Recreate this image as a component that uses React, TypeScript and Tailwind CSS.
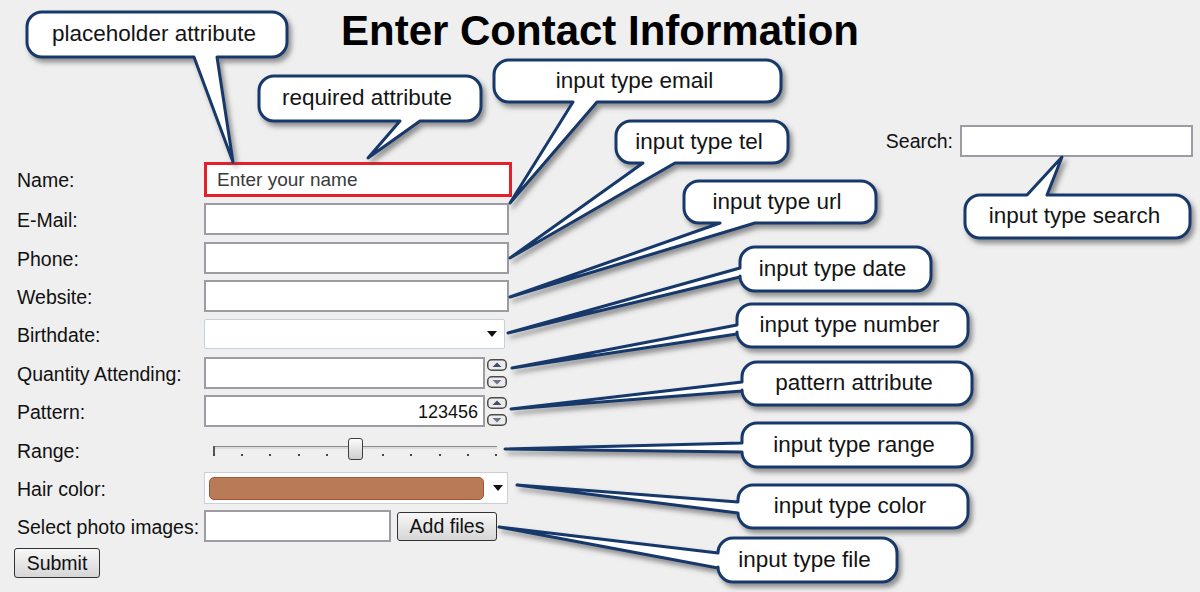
import React from 'react'

type Side = 'top' | 'bottom' | 'left'

type Callout = {
  text: string
  x: number
  y: number
  w: number
  h: number
  side: Side
  b1: number
  b2: number
  tip: [number, number]
}

const CALLOUTS: Callout[] = [
  { text: 'placeholder attribute', x: 27, y: 12, w: 260, h: 45, side: 'bottom', b1: 194, b2: 217, tip: [233, 162] },
  { text: 'required attribute', x: 259, y: 76, w: 222, h: 45, side: 'bottom', b1: 400, b2: 420, tip: [368, 158] },
  { text: 'input type email', x: 494, y: 60, w: 287, h: 42, side: 'bottom', b1: 573, b2: 597, tip: [510, 203] },
  { text: 'input type tel', x: 616, y: 121, w: 172, h: 42, side: 'bottom', b1: 643, b2: 675, tip: [510, 258] },
  { text: 'input type url', x: 684, y: 181, w: 192, h: 42, side: 'bottom', b1: 720, b2: 755, tip: [510, 297] },
  { text: 'input type date', x: 740, y: 247, w: 191, h: 44, side: 'left', b1: 268, b2: 277, tip: [508, 333] },
  { text: 'input type number', x: 737, y: 304, w: 231, h: 43, side: 'left', b1: 325, b2: 334, tip: [512, 368] },
  { text: 'pattern attribute', x: 742, y: 362, w: 230, h: 43, side: 'left', b1: 382, b2: 391, tip: [511, 409] },
  { text: 'input type range', x: 742, y: 423, w: 230, h: 44, side: 'left', b1: 443, b2: 452, tip: [505, 449] },
  { text: 'input type color', x: 738, y: 485, w: 230, h: 43, side: 'left', b1: 502, b2: 513, tip: [517, 485] },
  { text: 'input type file', x: 718, y: 538, w: 179, h: 44, side: 'left', b1: 553, b2: 568, tip: [499, 527] },
  { text: 'input type search', x: 965, y: 195, w: 225, h: 43, side: 'top', b1: 1027, b2: 1047, tip: [1062, 157] },
]

// rounded box with the pointer merged into one outline
function bubblePath(c: Callout) {
  const r = 15
  const { x, y, w, h, side, b1, b2, tip } = c
  const t = `L ${tip[0]} ${tip[1]}`
  let d = `M ${x + r} ${y} `
  if (side === 'top') d += `L ${b1} ${y} ${t} L ${b2} ${y} `
  d += `L ${x + w - r} ${y} A ${r} ${r} 0 0 1 ${x + w} ${y + r} `
  d += `L ${x + w} ${y + h - r} A ${r} ${r} 0 0 1 ${x + w - r} ${y + h} `
  if (side === 'bottom') d += `L ${b2} ${y + h} ${t} L ${b1} ${y + h} `
  d += `L ${x + r} ${y + h} A ${r} ${r} 0 0 1 ${x} ${y + h - r} `
  if (side === 'left') d += `L ${x} ${b2} ${t} L ${x} ${b1} `
  d += `L ${x} ${y + r} A ${r} ${r} 0 0 1 ${x + r} ${y} Z`
  return d
}

function DownArrow() {
  return (
    <svg width="10" height="6" viewBox="0 0 10 6">
      <path d="M0 0 H10 L5 6 Z" fill="#111" />
    </svg>
  )
}

function SpinButton({ up }: { up?: boolean }) {
  return (
    <svg width="20" height="12" viewBox="0 0 20 12">
      <rect x="0.75" y="0.75" width="18.5" height="10.5" rx="4" fill="#ececec" stroke="#4b4b4b" strokeWidth="1.5" />
      {up ? <path d="M5.5 8 L10 3.5 L14.5 8 Z" fill="#3f4d66" /> : <path d="M5.5 4 L10 8.5 L14.5 4 Z" fill="#6a7690" />}
    </svg>
  )
}

function Spinner() {
  return (
    <div className="ml-[2px] flex flex-col gap-[5px]">
      <SpinButton up />
      <SpinButton />
    </div>
  )
}

function Label({ children }: { children: React.ReactNode }) {
  return <div className="w-[204px] shrink-0 pl-[17px] pt-[3px] text-[19.5px] text-[#111]">{children}</div>
}

const TICKS = Array.from({ length: 11 }, (_, i) => i)

export default function App() {
  return (
    <div className="relative h-[592px] w-[1200px] overflow-hidden bg-[#efefef] font-['Liberation_Sans',Arial,sans-serif] text-[#111]">
      <h1 className="pt-[10px] text-center text-[42px] font-bold leading-[42px] text-black">Enter Contact Information</h1>

      <div className="mt-[73px] flex h-[32px] items-center justify-end pr-[7px]">
        <span className="mr-[7px] pt-[2px] text-[19.5px]">Search:</span>
        <input type="search" className="h-[32px] w-[233px] border-2 border-[#9c9ca2] bg-white outline-none" />
      </div>

      <form className="mt-[5px]" onSubmit={(e) => e.preventDefault()}>
        <div className="mb-[6px] flex h-[35px] items-center">
          <Label>Name:</Label>
          <input
            required
            placeholder="Enter your name"
            className="h-[35px] w-[308px] border-[3px] border-[#e4212b] bg-white pl-[10px] text-[19px] text-[#333] outline-none placeholder:text-[#3a3a3a]"
          />
        </div>

        <div className="mb-[7px] flex h-[32px] items-center">
          <Label>E-Mail:</Label>
          <input type="email" className="h-[32px] w-[305px] border-2 border-[#9c9ca2] bg-white outline-none" />
        </div>

        <div className="mb-[6px] flex h-[32px] items-center">
          <Label>Phone:</Label>
          <input type="tel" className="h-[32px] w-[305px] border-2 border-[#9c9ca2] bg-white outline-none" />
        </div>

        <div className="mb-[7px] flex h-[32px] items-center">
          <Label>Website:</Label>
          <input type="url" className="h-[32px] w-[305px] border-2 border-[#9c9ca2] bg-white outline-none" />
        </div>

        <div className="mb-[8px] flex h-[30px] items-center">
          <Label>Birthdate:</Label>
          <div className="flex h-[30px] w-[301px] items-center justify-end rounded-[2px] border border-[#c8d0da] bg-white pr-[7px]">
            <DownArrow />
          </div>
        </div>

        <div className="mb-[6px] flex h-[32px] items-center">
          <Label>Quantity Attending:</Label>
          <div className="h-[32px] w-[281px] border-2 border-[#9c9ca2] bg-white" />
          <Spinner />
        </div>

        <div className="mb-[9px] flex h-[32px] items-center">
          <Label>Pattern:</Label>
          <div className="flex h-[32px] w-[281px] items-center justify-end border-2 border-[#9c9ca2] bg-white pr-[5px] pt-[2px] text-[18px]">
            123456
          </div>
          <Spinner />
        </div>

        <div className="mb-[8px] flex h-[28px] items-center">
          <Label>Range:</Label>
          <div className="relative ml-[9px] h-[28px] w-[284px]">
            <div className="absolute left-0 right-0 top-[10px] h-[3px] border-t border-[#8c8c8c] bg-[#dcdcdc]" />
            <div className="absolute left-0 top-[10px] h-[10px] w-[2px] bg-[#555]" />
            <div className="absolute left-0 right-0 top-[18px] flex justify-between">
              {TICKS.map((i) => (
                <div key={i} className="h-[2px] w-[2px] bg-[#444]" />
              ))}
            </div>
            <div className="absolute left-[135px] top-[2px] h-[22px] w-[15px] rounded-[3px] border border-[#3f3f3f] bg-linear-to-b from-[#fbfbfb] to-[#cfcfcf]" />
          </div>
        </div>

        <div className="mb-[6px] flex h-[32px] items-center">
          <Label>Hair color:</Label>
          <div className="flex h-[32px] w-[304px] items-center border border-[#c9d0d9] bg-white pl-[4px]">
            <div className="h-[23px] w-[275px] rounded-[5px] border border-[#a9562f] bg-[#b97a58]" />
            <div className="ml-[9px]">
              <DownArrow />
            </div>
          </div>
        </div>

        <div className="mb-[6px] flex h-[32px] items-center">
          <Label>Select photo images:</Label>
          <div className="h-[32px] w-[187px] border-2 border-[#9c9ca2] bg-white" />
          <button
            type="button"
            className="ml-[6px] h-[29px] w-[100px] rounded-[3px] border border-[#333] bg-linear-to-b from-[#f7f7f7] to-[#d6d6d6] pt-[2px] text-[19.5px] leading-none text-[#111]"
          >
            Add files
          </button>
        </div>

        <button
          type="submit"
          className="ml-[14px] h-[30px] w-[86px] rounded-[3px] border border-[#333] bg-linear-to-b from-[#f7f7f7] to-[#d6d6d6] pt-[2px] text-[19.5px] leading-none text-[#111]"
        >
          Submit
        </button>
      </form>

      {/* annotation callouts */}
      <svg className="pointer-events-none absolute left-0 top-0" width="1200" height="592" viewBox="0 0 1200 592">
        <defs>
          <filter id="bubble-shadow" x="-20%" y="-20%" width="150%" height="160%">
            <feDropShadow dx="3" dy="4" stdDeviation="2.5" floodColor="#4f4f4f" floodOpacity="0.6" />
          </filter>
        </defs>
        {CALLOUTS.map((c) => (
          <path
            key={c.text}
            d={bubblePath(c)}
            fill="#fff"
            stroke="#16386a"
            strokeWidth="3"
            strokeLinejoin="round"
            filter="url(#bubble-shadow)"
          />
        ))}
      </svg>
      {CALLOUTS.map((c) => (
        <div
          key={c.text}
          className="pointer-events-none absolute flex items-center justify-center pr-[6px] text-[22.5px] leading-none text-[#141414]"
          style={{ left: c.x, top: c.y, width: c.w, height: c.h }}
        >
          {c.text}
        </div>
      ))}
    </div>
  )
}
